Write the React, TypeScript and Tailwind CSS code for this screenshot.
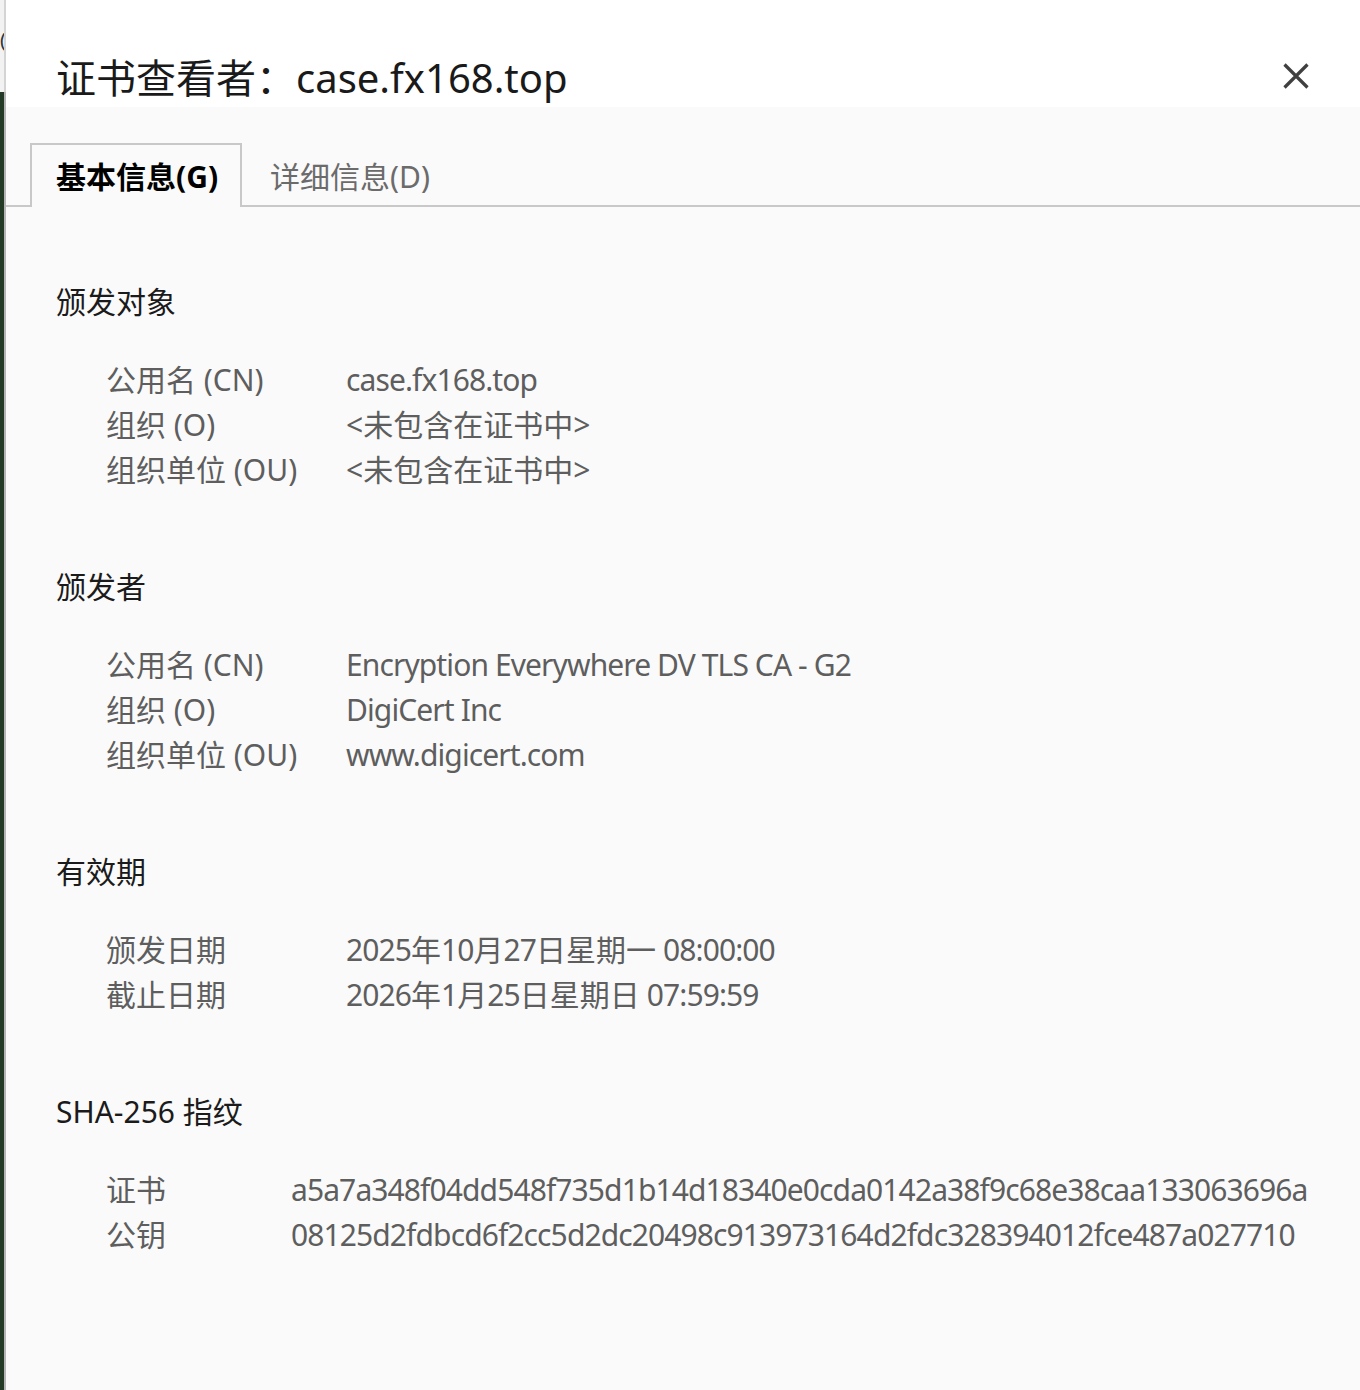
const font = "font-['Noto_Sans','Noto_Sans_CJK_SC',sans-serif]";

type Row = [string, string];

const sections: { title: string; labelW: string; rows: Row[] }[] = [
  {
    title: "颁发对象",
    labelW: "w-[240px]",
    rows: [
      ["公用名 (CN)", "case.fx168.top"],
      ["组织 (O)", "<未包含在证书中>"],
      ["组织单位 (OU)", "<未包含在证书中>"],
    ],
  },
  {
    title: "颁发者",
    labelW: "w-[240px]",
    rows: [
      ["公用名 (CN)", "Encryption Everywhere DV TLS CA - G2"],
      ["组织 (O)", "DigiCert Inc"],
      ["组织单位 (OU)", "www.digicert.com"],
    ],
  },
  {
    title: "有效期",
    labelW: "w-[240px]",
    rows: [
      ["颁发日期", "2025年10月27日星期一 08:00:00"],
      ["截止日期", "2026年1月25日星期日 07:59:59"],
    ],
  },
  {
    title: "SHA-256 指纹",
    labelW: "w-[185px]",
    rows: [
      ["证书", "a5a7a348f04dd548f735d1b14d18340e0cda0142a38f9c68e38caa133063696a"],
      ["公钥", "08125d2fdbcd6f2cc5d2dc20498c913973164d2fdc328394012fce487a027710"],
    ],
  },
];

// latin runs are a bit wider than the original UI font, pull them in
function Value({ text }: { text: string }) {
  const parts = text.match(/[\u3000-\u9fff<>]+|[^\u3000-\u9fff<>]+/g) ?? [];
  return (
    <div className="whitespace-nowrap">
      {parts.map((p, i) =>
        /[\u3000-\u9fff<>]/.test(p) ? (
          <span key={i}>{p}</span>
        ) : (
          <span key={i} className="tracking-[-0.9px]">
            {p}
          </span>
        )
      )}
    </div>
  );
}

function Section({ title, labelW, rows }: { title: string; labelW: string; rows: Row[] }) {
  return (
    <section className="pt-[72px]">
      <h2 className="text-[30px] leading-[45px] text-[#1b1b1b]">{title}</h2>
      <div className="mt-[33px] pl-[50px]">
        {rows.map(([label, value]) => (
          <div key={label} className="flex text-[30px] leading-[45px] text-[#5e5e5e]">
            <div className={`${labelW} shrink-0`}>{label}</div>
            <Value text={value} />
          </div>
        ))}
      </div>
    </section>
  );
}

export default function App() {
  return (
    <div className={`flex w-[1360px] min-h-[1390px] ${font}`}>
      {/* window edge behind the dialog */}
      <div className="flex w-[6px] shrink-0 flex-col">
        <div className="h-[92px] overflow-hidden border-r-2 border-[#d4d4d4] bg-[#f2f2f2] pt-[28px] text-[20px] leading-[24px] text-[#333]">
          (
        </div>
        <div className="flex-1 border-r-2 border-[#b4b4b4] bg-[#233a27]" />
      </div>

      <div className="flex flex-1 flex-col">
        <header className="flex h-[107px] items-start justify-between bg-white pl-[50px] pr-[51px] pt-[54px]">
          <h1 className="text-[40px] leading-[48px] text-[#1a1a1a]">证书查看者：case.fx168.top</h1>
          <button className="mt-[9px] text-[#404040]" aria-label="关闭">
            <svg width="26" height="26" viewBox="0 0 26 26" fill="none" stroke="currentColor" strokeWidth="3.2">
              <path d="M1.5 1.5 L24.5 24.5 M24.5 1.5 L1.5 24.5" />
            </svg>
          </button>
        </header>

        <main className="flex-1 bg-[#fafafa]">
          <nav className="mt-[36px] flex border-b-2 border-[#c8c8c8] pl-[24px]">
            <div className="-mb-[2px] h-[64px] w-[212px] border-x-2 border-t-2 border-[#c8c8c8] bg-[#fafafa] pl-[24px] pt-[12px] text-[30px] font-bold leading-[40px] text-black">
              基本信息(G)
            </div>
            <div className="pl-[28px] pt-[14px] text-[30px] leading-[40px] text-[#6b6b6b]">详细信息(D)</div>
          </nav>

          <div className="pl-[50px]">
            {sections.map((s) => (
              <Section key={s.title} {...s} />
            ))}
          </div>
        </main>
      </div>
    </div>
  );
}
